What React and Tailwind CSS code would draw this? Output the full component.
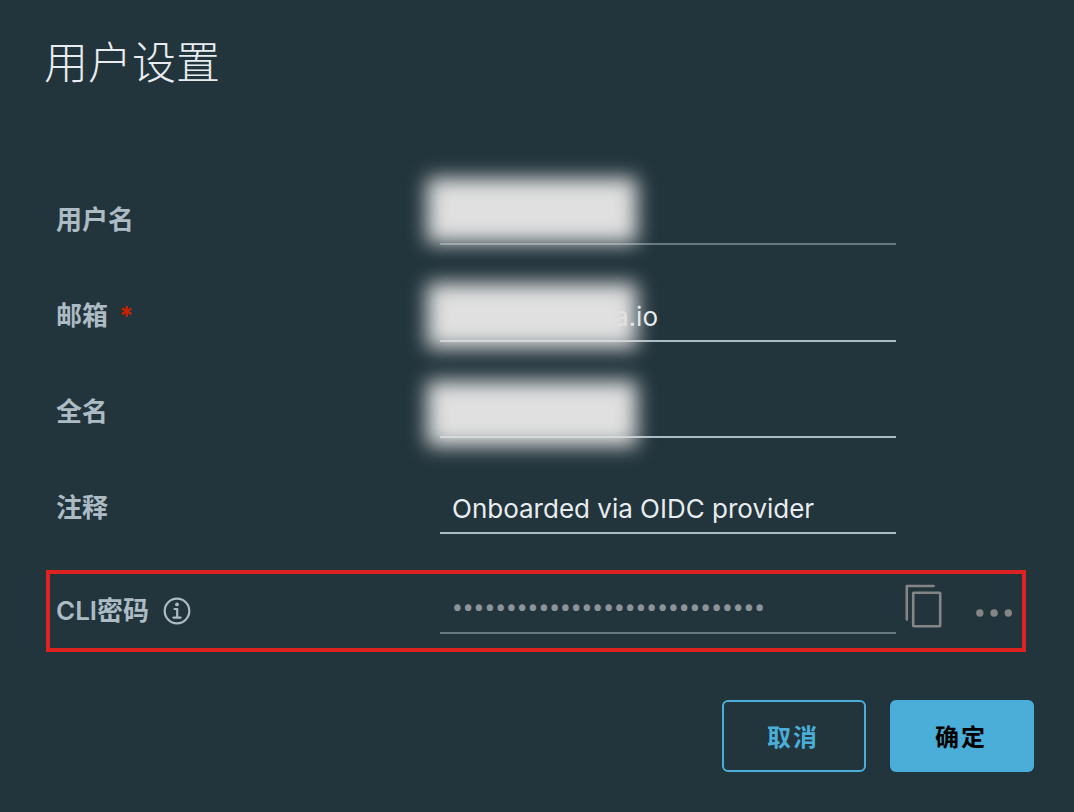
import React from 'react'
import { clsx } from 'clsx'

const fields = [
  { id: 'username', label: '用户名', masked: 'top-[7px]', disabled: true },
  { id: 'email', label: '邮箱', value: 'a.io', required: true, masked: 'top-4', pad: 'pl-[174px]' },
  { id: 'realname', label: '全名', masked: 'top-[18px]' },
  { id: 'comment', label: '注释', value: 'Onboarded via OIDC provider' },
]

const InfoIcon = () => (
  <svg className="w-7 h-7" viewBox="0 0 28 28" fill="none" stroke="currentColor" strokeWidth="2.2">
    <circle cx="14" cy="14" r="12.3" />
    <circle cx="14" cy="7.4" r="1.9" fill="currentColor" stroke="none" />
    <path d="M11.5 12H14.2V20.4M10.4 20.6H17.6" strokeLinecap="round" strokeLinejoin="round" />
  </svg>
)

const CopyIcon = () => (
  <svg className="w-[38px] h-11" viewBox="0 0 38 44" fill="none" stroke="currentColor" strokeWidth="2.6" strokeLinecap="round" strokeLinejoin="round">
    <path d="M1.8 35.5V2H28.6" />
    <rect x="8.2" y="8.8" width="27" height="33.4" rx="0.5" />
  </svg>
)

const MoreIcon = () => (
  <svg className="w-9 h-2" viewBox="0 0 36 8" fill="currentColor">
    <circle cx="3.8" cy="4" r="3.7" />
    <circle cx="18.1" cy="4" r="3.7" />
    <circle cx="32.3" cy="4" r="3.7" />
  </svg>
)

const Field = ({ field }) => (
  <div className="relative flex items-center h-24 pl-[10px] pr-[130px]">
    <label htmlFor={field.id} className="w-96 shrink-0 text-[26px] font-bold">
      {field.label}
      {field.required && <span className="ml-[11px] text-[#c92100]">*</span>}
    </label>
    <div className="flex-1 min-w-0">
      <input
        id={field.id}
        type="text"
        defaultValue={field.value || ''}
        readOnly={field.disabled}
        className={clsx(
          'block w-full pt-1 border-b-2 bg-transparent outline-none text-[26px] text-[#e9ecef]',
          field.pad || 'pl-3',
          field.disabled ? 'h-[52px] border-[#667a82]' : 'h-[54px] border-[#adbbc4]'
        )}
      />
    </div>
    {field.masked && (
      <div className={clsx('absolute left-[381px] w-[210px] h-[65px] bg-[#e0e0e0] blur-[10px] pointer-events-none', field.masked)} />
    )}
  </div>
)

const App = () => {
  return (
    <main className="min-h-screen bg-[#22343c] pt-[33px] pb-10 text-[#adbbc4] font-[Inter,'Noto_Sans_CJK_SC',sans-serif]">
      <h1 className="px-11 text-[44px] leading-[60px] font-light text-[#e9ecef]">用户设置</h1>

      <form className="mt-[78px]" onSubmit={(e) => e.preventDefault()}>
        <div className="pl-[46px] pr-12">
          {fields.map((field) => (
            <Field key={field.id} field={field} />
          ))}

          <div className="flex items-center h-[82px] mt-[15px] pl-[6px] border-4 border-[#dd2222]">
            <div className="flex items-center gap-[14px] w-96 shrink-0">
              <label htmlFor="cli" className="pb-[2px] text-[26px] font-semibold">CLI密码</label>
              <button type="button" aria-label="CLI密码说明"><InfoIcon /></button>
            </div>
            <div className="flex-1 min-w-0">
              <input
                id="cli"
                type="password"
                readOnly
                defaultValue={'0'.repeat(29)}
                className="block w-full h-[46px] pl-3 pb-1 border-b-2 border-[#667a82] bg-transparent outline-none text-[32px] text-[#8b949a] font-[Roboto,sans-serif]"
              />
            </div>
            <div className="flex items-center justify-between w-[126px] pl-[9px] pr-[10px] shrink-0 text-[#858585]">
              <button type="button" aria-label="复制" className="pb-[10px]"><CopyIcon /></button>
              <button type="button" aria-label="更多" className="pt-1"><MoreIcon /></button>
            </div>
          </div>
        </div>

        <div className="flex justify-end gap-6 mt-12 px-10">
          <button type="button" className="w-36 h-[72px] pt-1 pr-[2px] rounded-md border-2 border-[#4aaed9] text-2xl font-bold tracking-[2px] text-[#4aaed9]">
            取消
          </button>
          <button type="submit" className="w-36 h-[72px] pt-1 pr-[2px] rounded-md bg-[#4aaed9] text-2xl font-bold tracking-[2px] text-black">
            确定
          </button>
        </div>
      </form>
    </main>
  )
}

export default App
